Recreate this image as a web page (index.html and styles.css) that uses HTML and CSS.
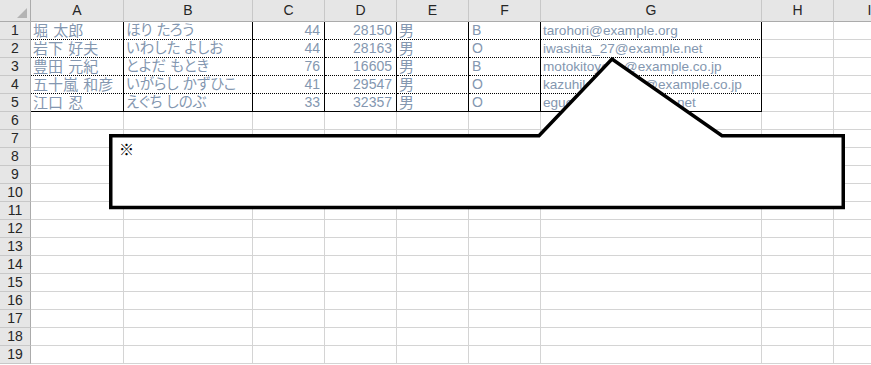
FILE: index.html
```html
<!DOCTYPE html>
<html lang="ja">
<head>
<meta charset="utf-8">
<title>Sheet</title>
<link rel="stylesheet" href="styles.css">
</head>
<body>
<div class="viewport">
  <div class="sheet">
    <div class="corner"><svg class="corner-tri" width="11" height="11" viewBox="0 0 11 11"><polygon points="10,0 10,10 0,10" fill="#b4b4b4"/></svg></div>
    <div class="colhead">A</div><div class="colhead">B</div><div class="colhead">C</div><div class="colhead">D</div><div class="colhead">E</div><div class="colhead">F</div><div class="colhead">G</div><div class="colhead">H</div><div class="colhead">I</div>

    <div class="rowhead">1</div>
    <div class="cell data kanji">堀 太郎</div><div class="cell data kana">ほり たろう</div><div class="cell data num">44</div><div class="cell data num">28150</div><div class="cell data kanji">男</div><div class="cell data latin">B</div><div class="cell data latin email">tarohori@example.org</div><div class="cell"></div><div class="cell"></div>

    <div class="rowhead">2</div>
    <div class="cell data kanji">岩下 好夫</div><div class="cell data kana">いわした よしお</div><div class="cell data num">44</div><div class="cell data num">28163</div><div class="cell data kanji">男</div><div class="cell data latin">O</div><div class="cell data latin email">iwashita_27@example.net</div><div class="cell"></div><div class="cell"></div>

    <div class="rowhead">3</div>
    <div class="cell data kanji">豊田 元紀</div><div class="cell data kana">とよだ もとき</div><div class="cell data num">76</div><div class="cell data num">16605</div><div class="cell data kanji">男</div><div class="cell data latin">B</div><div class="cell data latin email">motokitoyoda@example.co.jp</div><div class="cell"></div><div class="cell"></div>

    <div class="rowhead">4</div>
    <div class="cell data kanji">五十嵐 和彦</div><div class="cell data kana">いがらし かずひこ</div><div class="cell data num">41</div><div class="cell data num">29547</div><div class="cell data kanji">男</div><div class="cell data latin">O</div><div class="cell data latin email">kazuhikoigarashi@example.co.jp</div><div class="cell"></div><div class="cell"></div>

    <div class="rowhead">5</div>
    <div class="cell data last kanji">江口 忍</div><div class="cell data last kana">えぐち しのぶ</div><div class="cell data last num">33</div><div class="cell data last num">32357</div><div class="cell data last kanji">男</div><div class="cell data last latin">O</div><div class="cell data last latin email">eguchishin@example.net</div><div class="cell"></div><div class="cell"></div>

    <div class="rowhead">6</div><div class="cell"></div><div class="cell"></div><div class="cell"></div><div class="cell"></div><div class="cell"></div><div class="cell"></div><div class="cell"></div><div class="cell"></div><div class="cell"></div>
    <div class="rowhead">7</div><div class="cell"></div><div class="cell"></div><div class="cell"></div><div class="cell"></div><div class="cell"></div><div class="cell"></div><div class="cell"></div><div class="cell"></div><div class="cell"></div>
    <div class="rowhead">8</div><div class="cell"></div><div class="cell"></div><div class="cell"></div><div class="cell"></div><div class="cell"></div><div class="cell"></div><div class="cell"></div><div class="cell"></div><div class="cell"></div>
    <div class="rowhead">9</div><div class="cell"></div><div class="cell"></div><div class="cell"></div><div class="cell"></div><div class="cell"></div><div class="cell"></div><div class="cell"></div><div class="cell"></div><div class="cell"></div>
    <div class="rowhead">10</div><div class="cell"></div><div class="cell"></div><div class="cell"></div><div class="cell"></div><div class="cell"></div><div class="cell"></div><div class="cell"></div><div class="cell"></div><div class="cell"></div>
    <div class="rowhead">11</div><div class="cell"></div><div class="cell"></div><div class="cell"></div><div class="cell"></div><div class="cell"></div><div class="cell"></div><div class="cell"></div><div class="cell"></div><div class="cell"></div>
    <div class="rowhead">12</div><div class="cell"></div><div class="cell"></div><div class="cell"></div><div class="cell"></div><div class="cell"></div><div class="cell"></div><div class="cell"></div><div class="cell"></div><div class="cell"></div>
    <div class="rowhead">13</div><div class="cell"></div><div class="cell"></div><div class="cell"></div><div class="cell"></div><div class="cell"></div><div class="cell"></div><div class="cell"></div><div class="cell"></div><div class="cell"></div>
    <div class="rowhead">14</div><div class="cell"></div><div class="cell"></div><div class="cell"></div><div class="cell"></div><div class="cell"></div><div class="cell"></div><div class="cell"></div><div class="cell"></div><div class="cell"></div>
    <div class="rowhead">15</div><div class="cell"></div><div class="cell"></div><div class="cell"></div><div class="cell"></div><div class="cell"></div><div class="cell"></div><div class="cell"></div><div class="cell"></div><div class="cell"></div>
    <div class="rowhead">16</div><div class="cell"></div><div class="cell"></div><div class="cell"></div><div class="cell"></div><div class="cell"></div><div class="cell"></div><div class="cell"></div><div class="cell"></div><div class="cell"></div>
    <div class="rowhead">17</div><div class="cell"></div><div class="cell"></div><div class="cell"></div><div class="cell"></div><div class="cell"></div><div class="cell"></div><div class="cell"></div><div class="cell"></div><div class="cell"></div>
    <div class="rowhead">18</div><div class="cell"></div><div class="cell"></div><div class="cell"></div><div class="cell"></div><div class="cell"></div><div class="cell"></div><div class="cell"></div><div class="cell"></div><div class="cell"></div>
    <div class="rowhead">19</div><div class="cell"></div><div class="cell"></div><div class="cell"></div><div class="cell"></div><div class="cell"></div><div class="cell"></div><div class="cell"></div><div class="cell"></div><div class="cell"></div>
  </div>

  <div class="callout">
    <svg class="callout-shape" width="871" height="365" viewBox="0 0 871 365">
      <polygon points="110.75,135.75 539,135.75 612,59 722,135.75 843.25,135.75 843.25,207.5 110.75,207.5" fill="#ffffff" stroke="#000000" stroke-width="3.5" stroke-linejoin="miter" stroke-miterlimit="10"/>
    </svg>
    <div class="callout-text">※</div>
  </div>
</div>
</body>
</html>
```
FILE: styles.css
```css
html, body {
  margin: 0;
  padding: 0;
  background: #ffffff;
}

.viewport {
  position: relative;
  width: 871px;
  height: 365px;
  overflow: hidden;
}

.sheet {
  display: grid;
  grid-template-columns: 31px 93px 129px 72px 72px 72px 72px 221px 72px 72px;
  grid-template-rows: 22px repeat(19, 18px);
  width: 906px;
  font-family: "Liberation Sans", "Noto Sans CJK JP", sans-serif;
}

.sheet > div {
  box-sizing: border-box;
  border-right: 1px solid #d4d4d4;
  border-bottom: 1px solid #d4d4d4;
  white-space: nowrap;
}

.corner {
  position: relative;
  background: #e6e6e6;
  border-right-color: #ababab !important;
  border-bottom-color: #ababab !important;
}

.corner-tri {
  position: absolute;
  left: 17px;
  top: 8px;
  display: block;
}

.colhead {
  background: #e6e6e6;
  border-right-color: #c8c8c8 !important;
  border-bottom-color: #ababab !important;
  text-align: center;
  font-size: 14px;
  line-height: 21px;
  color: #262626;
}

.rowhead {
  background: #e6e6e6;
  border-right-color: #ababab !important;
  border-bottom-color: #c8c8c8 !important;
  text-align: center;
  font-size: 14px;
  line-height: 17px;
  color: #262626;
}

.cell {
  font-size: 14px;
  line-height: 17px;
  color: #8497b0;
  padding: 0 2px;
}

.cell.kanji {
  font-size: 15px;
  padding-left: 2px;
  word-spacing: 1px;
}

.cell.kana {
  font-size: 14.5px;
  font-feature-settings: "palt";
}

.cell.latin {
  padding-left: 3px;
}

.cell.email {
  font-size: 13.6px;
  padding-left: 2px;
}

.cell.data {
  border-right: 1px solid #000000;
  border-bottom: 1px dotted #000000;
}

.cell.data.last {
  border-bottom: 1px solid #000000;
}

.cell.num {
  text-align: right;
  padding-right: 4px;
}

.callout {
  position: absolute;
  left: 0;
  top: 0;
  width: 871px;
  height: 365px;
}

.callout-shape {
  position: absolute;
  left: 0;
  top: 0;
  display: block;
}

.callout-text {
  position: absolute;
  left: 119px;
  top: 140px;
  font-family: "Noto Sans CJK JP", sans-serif;
  font-size: 15px;
  line-height: 17px;
  color: #000000;
}
```
